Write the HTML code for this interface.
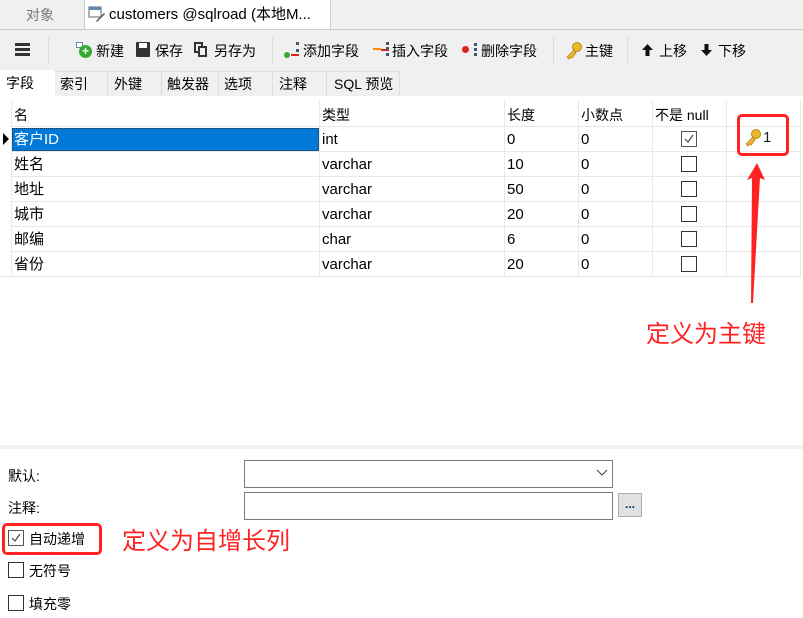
<!DOCTYPE html>
<html><head><meta charset="utf-8"><style>
*{box-sizing:border-box;margin:0;padding:0}
body{width:803px;height:618px;background:#fff;font-family:"Liberation Sans","Noto Sans CJK SC",sans-serif;font-size:14px;color:#000;position:relative;overflow:hidden}
.a{position:absolute;white-space:nowrap;line-height:18px}
.cb{position:absolute;width:16px;height:16px;border:1px solid #333;background:#fff}
.hl{position:absolute;left:11px;width:789px;height:1px;background:#e8e8e8}
.vl{position:absolute;top:101px;height:176px;width:1px;background:#e8e8e8}
.r{font-size:15px}
.big{font-size:24px;line-height:28px;color:#f22}
</style></head><body>
<!-- top tabs -->
<div class="a" style="left:0;top:0;width:803px;height:29px;background:#f0f0f0"></div>
<div class="a" style="left:26px;top:6px;color:#777">对象</div>
<div class="a" style="left:84px;top:0;width:247px;height:30px;background:#fff;border-left:1px solid #ccc;border-right:1px solid #ccc"></div>
<svg class="a" style="left:88px;top:5px" width="18" height="18"><rect x="1" y="2" width="12" height="10" fill="#fff" stroke="#567"/><rect x="1" y="2" width="12" height="3" fill="#68a"/><path d="M8 16 L16 8 L17 9 L9 17Z" fill="#555"/></svg>
<div class="a" style="left:109px;top:6px;font-size:15px">customers @sqlroad (本地M...</div>
<!-- toolbar -->
<div class="a" style="left:0;top:29px;width:803px;height:67px;background:#f0f0f0;border-top:1px solid #ccc"></div>
<div class="a" style="left:15px;top:43px;width:15px;height:3px;background:#333;box-shadow:0 5px 0 #333,0 10px 0 #333"></div>
<div class="a" style="left:48px;top:37px;width:1px;height:27px;background:#ddd"></div>
<div class="a" style="left:76px;top:42px;width:7px;height:6px;border:1px solid #68a;background:#fff"></div>
<div class="a" style="left:79px;top:45px;width:13px;height:13px;border-radius:50%;background:#3a3;color:#fff;font-size:12px;line-height:13px;text-align:center;font-weight:bold">+</div>
<div class="a" style="left:96px;top:42px">新建</div>
<div class="a" style="left:136px;top:42px;width:14px;height:15px;background:#333;border-radius:1px"></div>
<div class="a" style="left:139px;top:43px;width:8px;height:5px;background:#fff"></div>
<div class="a" style="left:155px;top:42px">保存</div>
<div class="a" style="left:194px;top:42px;width:9px;height:11px;border:2px solid #333"></div>
<div class="a" style="left:198px;top:46px;width:9px;height:11px;border:2px solid #333;background:#f0f0f0"></div>
<div class="a" style="left:214px;top:42px">另存为</div>
<div class="a" style="left:272px;top:37px;width:1px;height:27px;background:#ddd"></div>
<div class="a" style="left:284px;top:52px;width:6px;height:6px;border-radius:50%;background:#3a3"></div>
<div class="a" style="left:291px;top:54px;width:8px;height:2px;background:#d22"></div>
<div class="a" style="left:293px;top:42px;width:6px;height:10px;border-right:3px dotted #456"></div>
<div class="a" style="left:303px;top:42px">添加字段</div>
<div class="a" style="left:373px;top:48px;width:8px;height:2px;background:#f80"></div>
<div class="a" style="left:381px;top:49px;width:8px;height:2px;background:#d22"></div>
<div class="a" style="left:383px;top:42px;width:6px;height:14px;border-right:3px dotted #456"></div>
<div class="a" style="left:392px;top:42px">插入字段</div>
<div class="a" style="left:462px;top:46px;width:7px;height:7px;border-radius:50%;background:#d22"></div>
<div class="a" style="left:472px;top:43px;width:5px;height:13px;border-right:3px dotted #456"></div>
<div class="a" style="left:481px;top:42px">删除字段</div>
<div class="a" style="left:553px;top:37px;width:1px;height:27px;background:#ddd"></div>
<svg class="a" style="left:565px;top:41px" width="18" height="20"><circle cx="12" cy="6" r="4.5" fill="#e8b830" stroke="#b88a10"/><path d="M9 9 L2 16 L4 18 L6 16 L7 17 L11 12Z" fill="#e8b830" stroke="#b88a10" stroke-width=".8"/></svg>
<div class="a" style="left:585px;top:42px">主键</div>
<div class="a" style="left:627px;top:37px;width:1px;height:27px;background:#ddd"></div>
<svg class="a" style="left:642px;top:44px" width="11" height="12"><path d="M5.5 0 L11 6 L7.5 6 L7.5 12 L3.5 12 L3.5 6 L0 6Z" fill="#111"/></svg>
<div class="a" style="left:659px;top:42px">上移</div>
<svg class="a" style="left:701px;top:44px" width="11" height="12"><path d="M5.5 12 L11 6 L7.5 6 L7.5 0 L3.5 0 L3.5 6 L0 6Z" fill="#111"/></svg>
<div class="a" style="left:718px;top:42px">下移</div>
<!-- sub tabs -->
<div class="a" style="left:0;top:70px;width:55px;height:27px;background:#fff"></div>
<div class="a" style="left:6px;top:74px">字段</div>
<div class="a" style="left:55px;top:71px;width:345px;height:25px;border-top:1px solid #ddd"></div>
<div class="a" style="left:60px;top:75px">索引</div>
<div class="a" style="left:107px;top:71px;width:1px;height:25px;background:#ddd"></div>
<div class="a" style="left:114px;top:75px">外键</div>
<div class="a" style="left:161px;top:71px;width:1px;height:25px;background:#ddd"></div>
<div class="a" style="left:167px;top:75px">触发器</div>
<div class="a" style="left:218px;top:71px;width:1px;height:25px;background:#ddd"></div>
<div class="a" style="left:224px;top:75px">选项</div>
<div class="a" style="left:272px;top:71px;width:1px;height:25px;background:#ddd"></div>
<div class="a" style="left:279px;top:75px">注释</div>
<div class="a" style="left:326px;top:71px;width:1px;height:25px;background:#ddd"></div>
<div class="a" style="left:334px;top:75px">SQL 预览</div>
<div class="a" style="left:399px;top:71px;width:1px;height:25px;background:#ddd"></div>
<!-- table -->
<div class="vl" style="left:11px"></div><div class="vl" style="left:319px"></div><div class="vl" style="left:504px"></div><div class="vl" style="left:578px"></div><div class="vl" style="left:652px"></div><div class="vl" style="left:726px"></div><div class="vl" style="left:800px"></div>
<div class="hl" style="top:126px"></div><div class="hl" style="top:151px"></div><div class="hl" style="top:176px"></div><div class="hl" style="top:201px"></div><div class="hl" style="top:226px"></div><div class="hl" style="top:251px"></div><div class="hl" style="top:276px;left:0;width:800px"></div>
<div class="a" style="left:14px;top:106px">名</div><div class="a" style="left:322px;top:106px">类型</div><div class="a" style="left:507px;top:106px">长度</div><div class="a" style="left:581px;top:106px">小数点</div><div class="a" style="left:655px;top:106px">不是 null</div>
<div class="a" style="left:12px;top:128px;width:307px;height:23px;background:#0078d7;border:1px dotted #333"></div>
<div class="a" style="left:3px;top:133px;width:0;height:0;border-left:6px solid #000;border-top:6px solid transparent;border-bottom:6px solid transparent"></div>
<div class="a r" style="left:14px;top:131px;color:#fff">客户ID</div>
<div class="a r" style="left:14px;top:156px">姓名</div>
<div class="a r" style="left:14px;top:181px">地址</div>
<div class="a r" style="left:14px;top:206px">城市</div>
<div class="a r" style="left:14px;top:231px">邮编</div>
<div class="a r" style="left:14px;top:256px">省份</div>
<div class="a r" style="left:322px;top:131px">int</div>
<div class="a r" style="left:322px;top:156px">varchar</div>
<div class="a r" style="left:322px;top:181px">varchar</div>
<div class="a r" style="left:322px;top:206px">varchar</div>
<div class="a r" style="left:322px;top:231px">char</div>
<div class="a r" style="left:322px;top:256px">varchar</div>
<div class="a r" style="left:507px;top:131px">0</div><div class="a r" style="left:507px;top:156px">10</div><div class="a r" style="left:507px;top:181px">50</div><div class="a r" style="left:507px;top:206px">20</div><div class="a r" style="left:507px;top:231px">6</div><div class="a r" style="left:507px;top:256px">20</div>
<div class="a r" style="left:581px;top:131px">0</div><div class="a r" style="left:581px;top:156px">0</div><div class="a r" style="left:581px;top:181px">0</div><div class="a r" style="left:581px;top:206px">0</div><div class="a r" style="left:581px;top:231px">0</div><div class="a r" style="left:581px;top:256px">0</div>
<div class="cb" style="left:681px;top:131px;border-color:#555"><svg width="14" height="14" style="position:absolute;left:0;top:0"><path d="M3 7 L6 10 L11 3" fill="none" stroke="#444" stroke-width="1.2"/></svg></div>
<div class="cb" style="left:681px;top:156px"></div><div class="cb" style="left:681px;top:181px"></div><div class="cb" style="left:681px;top:206px"></div><div class="cb" style="left:681px;top:231px"></div><div class="cb" style="left:681px;top:256px"></div>
<svg class="a" style="left:744px;top:128px" width="18" height="20"><circle cx="12" cy="6" r="4.5" fill="#e8b830" stroke="#b88a10"/><path d="M9 9 L2 16 L4 18 L6 16 L7 17 L11 12Z" fill="#e8b830" stroke="#b88a10" stroke-width=".8"/></svg>
<div class="a r" style="left:763px;top:129px;color:#123">1</div>
<div class="a" style="left:737px;top:114px;width:52px;height:42px;border:3px solid #f22;border-radius:5px"></div>
<svg class="a" style="left:740px;top:160px" width="30" height="145"><polygon points="17,3 7,20 12,18 11,143 13,143 20,18 25,20" fill="#f22"/></svg>
<div class="a big" style="left:646px;top:321px">定义为主键</div>
<!-- bottom -->
<div class="a" style="left:0;top:445px;width:803px;height:4px;background:#f0f0f0"></div>
<div class="a" style="left:8px;top:467px">默认:</div>
<div class="a" style="left:244px;top:460px;width:369px;height:28px;border:1px solid #7a7a7a"></div>
<svg class="a" style="left:596px;top:469px" width="12" height="8"><path d="M1 1 L6 6 L11 1" fill="none" stroke="#444"/></svg>
<div class="a" style="left:8px;top:499px">注释:</div>
<div class="a" style="left:244px;top:492px;width:369px;height:28px;border:1px solid #7a7a7a"></div>
<div class="a" style="left:618px;top:493px;width:24px;height:24px;border:1px solid #adadad;background:#e1e1e1;text-align:center;font-size:12px;line-height:20px;color:#036;font-weight:bold">...</div>
<div class="cb" style="left:8px;top:530px;border-color:#555"><svg width="14" height="14" style="position:absolute;left:0;top:0"><path d="M3 7 L6 10 L11 3" fill="none" stroke="#444" stroke-width="1.2"/></svg></div>
<div class="a" style="left:29px;top:530px">自动递增</div>
<div class="a" style="left:2px;top:523px;width:100px;height:32px;border:3px solid #f22;border-radius:5px"></div>
<div class="a big" style="left:122px;top:528px">定义为自增长列</div>
<div class="cb" style="left:8px;top:562px"></div><div class="a" style="left:29px;top:562px">无符号</div>
<div class="cb" style="left:8px;top:595px"></div><div class="a" style="left:29px;top:595px">填充零</div>
</body></html>
